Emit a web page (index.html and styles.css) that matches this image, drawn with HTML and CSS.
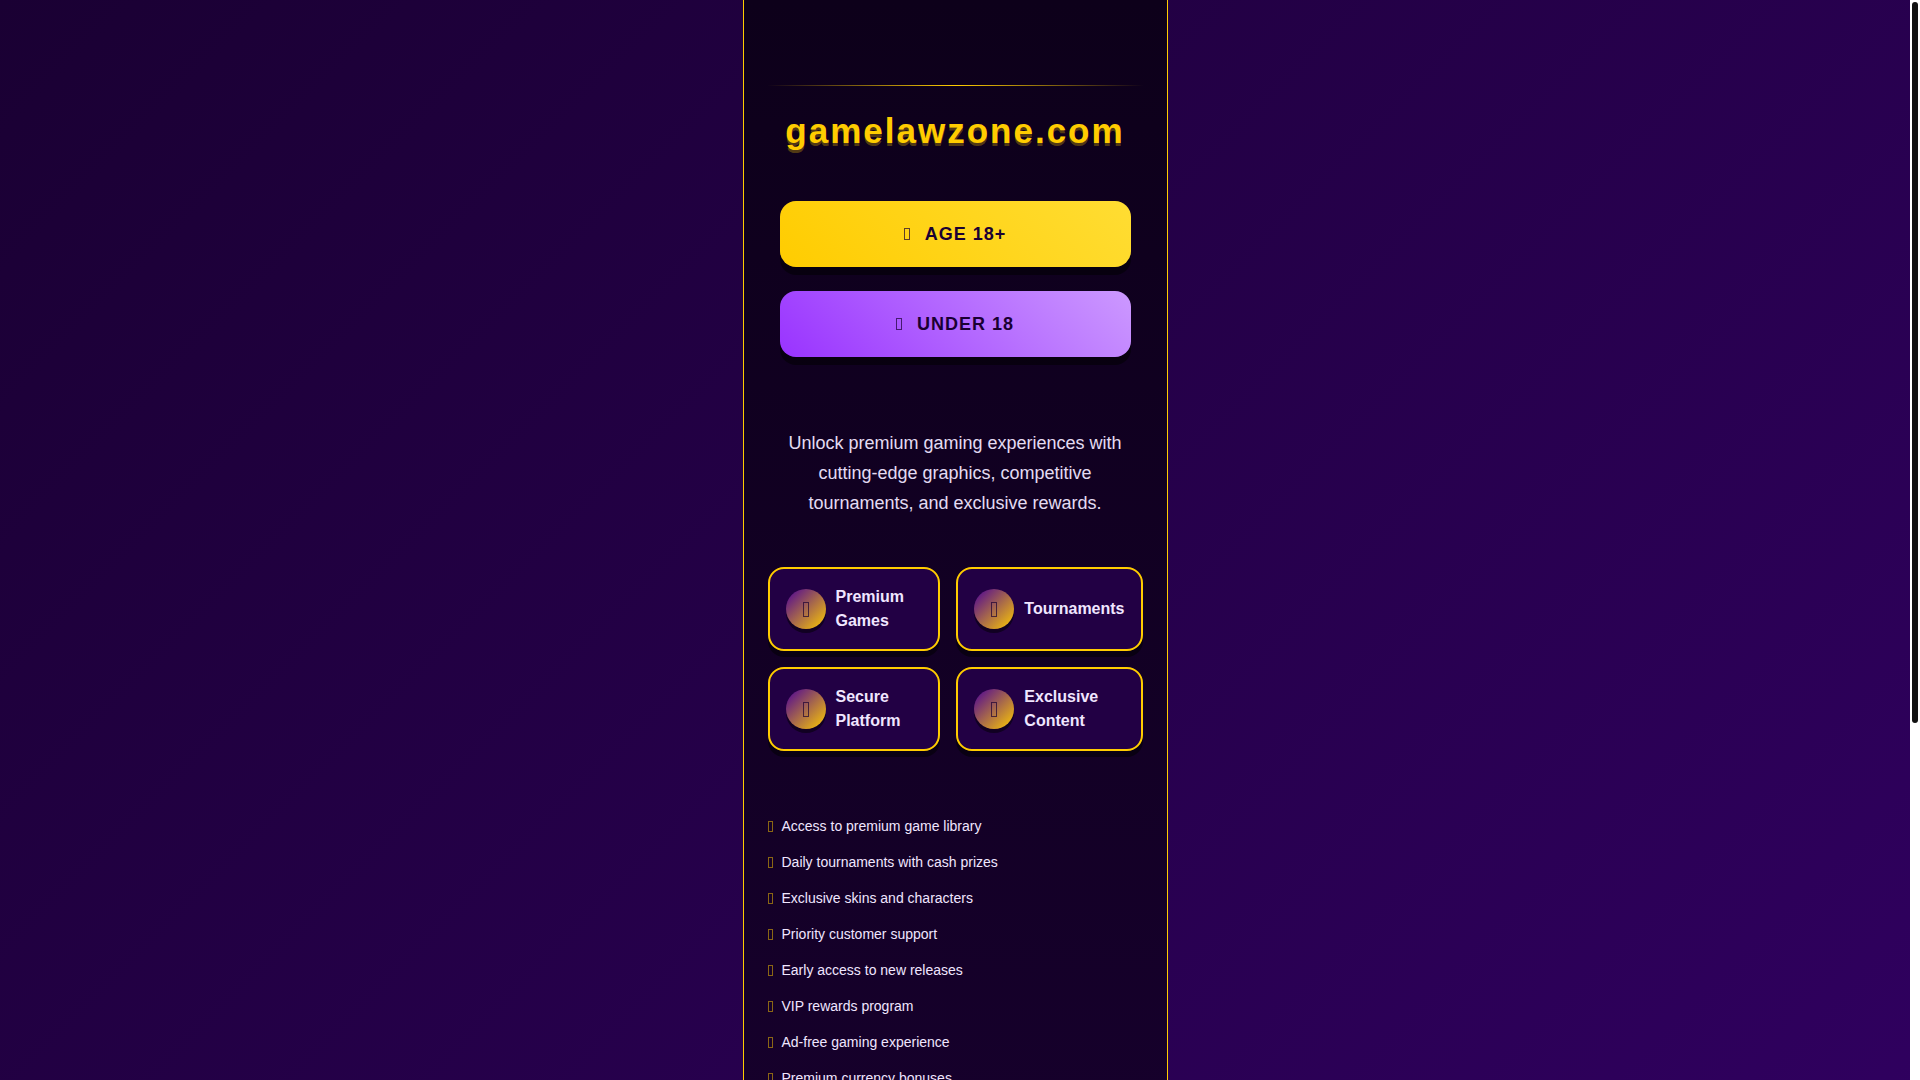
FILE: index.html
```html
<!DOCTYPE html>
<html lang="en">
<head>
<meta charset="UTF-8">
<meta name="viewport" content="width=device-width, initial-scale=1">
<title>gamelawzone.com</title>
<link rel="stylesheet" href="styles.css">
</head>
<body>
  <div class="page">
    <div class="container">
      <header class="header"></header>
      <main>
        <h1 class="title">gamelawzone.com</h1>

        <div class="actions">
          <button type="button" class="btn btn-gold"><span class="glyph"></span>Age 18+</button>
          <button type="button" class="btn btn-purple"><span class="glyph"></span>Under 18</button>
        </div>

        <p class="intro">Unlock premium gaming experiences with cutting-edge graphics, competitive tournaments, and exclusive rewards.</p>

        <div class="cards">
          <div class="card"><span class="card-icon"></span><span>Premium Games</span></div>
          <div class="card"><span class="card-icon"></span><span>Tournaments</span></div>
          <div class="card"><span class="card-icon"></span><span>Secure Platform</span></div>
          <div class="card"><span class="card-icon"></span><span>Exclusive Content</span></div>
        </div>

        <ul class="benefits">
          <li>Access to premium game library</li>
          <li>Daily tournaments with cash prizes</li>
          <li>Exclusive skins and characters</li>
          <li>Priority customer support</li>
          <li>Early access to new releases</li>
          <li>VIP rewards program</li>
          <li>Ad-free gaming experience</li>
          <li>Premium currency bonuses</li>
        </ul>
      </main>
    </div>
  </div>
  <div class="scrollbar"><div class="scrollbar-thumb"></div></div>
</body>
</html>
```

FILE: styles.css
```css
*,
*::before {
  box-sizing: border-box;
  margin: 0;
  padding: 0;
}
html {
  scrollbar-width: none;
}
body {
  padding-right: 10px;
  font-family: "Liberation Sans", Arial, sans-serif;
  color: #f0e6ff;
}
.page {
  min-height: 149vh;
  display: flex;
  justify-content: center;
  background: linear-gradient(135deg, #1a0033, #330066);
}
.container {
  width: 100%;
  max-width: 425px;
  padding: 24px;
  background: linear-gradient(180deg, #0d001a, #1a0033);
  border: solid #ffcc00;
  border-width: 0 1px;
}
.header {
  height: 62px;
  border-bottom: 1px solid;
  border-image: linear-gradient(90deg, transparent, #ffcc00, transparent) 1;
}
.title {
  margin: 24px 0 49px;
  font-size: 35px;
  line-height: 42px;
  letter-spacing: 2px;
  text-align: center;
  color: #ffcc00;
  text-shadow: 0 3px 0 rgba(255, 204, 0, 0.3);
}

/* Buttons */
.actions {
  display: flex;
  flex-direction: column;
  gap: 24px;
  padding: 0 12px;
}
.btn {
  display: flex;
  justify-content: center;
  align-items: center;
  height: 66px;
  border: none;
  border-radius: 16px;
  font-family: inherit;
  font-size: 18px;
  font-weight: bold;
  letter-spacing: 1px;
  text-transform: uppercase;
  color: #1a0033;
  box-shadow: 0 8px 0 rgba(0, 0, 0, 0.5);
  cursor: pointer;
}
.btn-gold {
  background: linear-gradient(45deg, #ffcc00, #ffdd33);
}
.btn-purple {
  background: linear-gradient(45deg, #9933ff, #cc99ff);
}

/* Empty glyph boxes */
.glyph,
.card-icon::before,
.benefits li::before {
  content: "";
  flex: none;
  width: 6px;
  height: 12px;
  border: 1px solid;
  opacity: 0.7;
}
.glyph {
  margin-right: 15px;
}

.intro {
  margin: 71px 12px 49px;
  font-size: 18px;
  line-height: 30px;
  text-align: center;
  opacity: 0.95;
}

/* Feature cards */
.cards {
  display: grid;
  grid-template-columns: 1fr 1fr;
  gap: 16px;
}
.card {
  display: flex;
  align-items: center;
  gap: 10px;
  padding: 16px;
  border: 2px solid #ffcc00;
  border-radius: 16px;
  background: #220044;
  font-weight: bold;
  line-height: 24px;
  box-shadow: 0 6px 0 rgba(0, 0, 0, 0.5);
}
.card-icon {
  flex: none;
  display: flex;
  justify-content: center;
  align-items: center;
  width: 40px;
  height: 40px;
  border-radius: 50%;
  background: linear-gradient(135deg, #4b0099, #ffcc00);
  color: #1a0033;
  box-shadow: 0 4px 0 rgba(0, 0, 0, 0.5);
}
.card-icon::before {
  width: 6px;
  height: 15px;
}

.benefits {
  margin-top: 65px;
  list-style: none;
}
.benefits li {
  display: flex;
  align-items: center;
  gap: 9px;
  font-size: 14px;
  line-height: 20px;
  padding: 0 0 16px;
}
.benefits li::before {
  width: 5px;
  height: 11px;
  color: #ffcc00;
  opacity: 0.5;
}

/* Scrollbar */
.scrollbar {
  position: fixed;
  top: 0;
  right: 0;
  bottom: 0;
  width: 10px;
  padding: 2px;
  background: #fff;
}
.scrollbar-thumb {
  height: 67%;
  border-radius: 3px;
  background: #111;
}
```
